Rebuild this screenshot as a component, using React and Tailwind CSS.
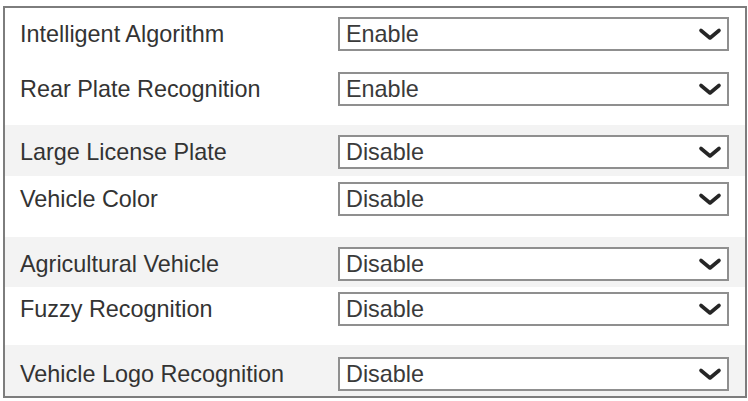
const rows = [
  { label: 'Intelligent Algorithm', value: 'Enable', h: 'h-[54px]', pt: 'pt-[9px]', gray: false },
  { label: 'Rear Plate Recognition', value: 'Enable', h: 'h-[63px]', pt: 'pt-[10px]', gray: false },
  { label: 'Large License Plate', value: 'Disable', h: 'h-[51px]', pt: 'pt-[10px]', gray: true },
  { label: 'Vehicle Color', value: 'Disable', h: 'h-[61px]', pt: 'pt-[6px]', gray: false },
  { label: 'Agricultural Vehicle', value: 'Disable', h: 'h-[50px]', pt: 'pt-[10px]', gray: true },
  { label: 'Fuzzy Recognition', value: 'Disable', h: 'h-[58px]', pt: 'pt-[5px]', gray: false },
  { label: 'Vehicle Logo Recognition', value: 'Disable', h: 'h-[51px]', pt: 'pt-[12px]', gray: true },
];

const Chevron = () => (
  <svg width="24" height="14" viewBox="0 0 24 14" className="shrink-0">
    <polyline
      points="3,3.5 12,11 21,3.5"
      fill="none"
      stroke="#262626"
      strokeWidth="3.6"
      strokeLinecap="round"
      strokeLinejoin="round"
    />
  </svg>
);

export default function App() {
  return (
    <div
      className="w-[748px] h-[401px] bg-white overflow-hidden pt-[6px] pl-[3px]"
      style={{ fontFamily: '"Liberation Sans", Arial, sans-serif' }}
    >
      <div className="w-[744px] h-[392px] border-2 border-[#7d7d7d] flex flex-col">
        {rows.map((r) => (
          <div
            key={r.label}
            className={`${r.h} ${r.pt} pl-[15px] ${r.gray ? 'bg-[#f3f3f3]' : 'bg-white'}`}
          >
            <div className="h-[34px] flex items-center">
              <div className="w-[318px] pt-[2px] text-[23.4px] text-[#333333] leading-none">{r.label}</div>
              <div className="w-[391px] h-[34px] bg-white border-2 border-[#8f8f8f] flex items-center justify-between pl-[6px] pr-[5px]">
                <span className="pt-[2px] text-[23.4px] text-[#3a3a3a] leading-none">{r.value}</span>
                <Chevron />
              </div>
            </div>
          </div>
        ))}
      </div>
    </div>
  );
}
